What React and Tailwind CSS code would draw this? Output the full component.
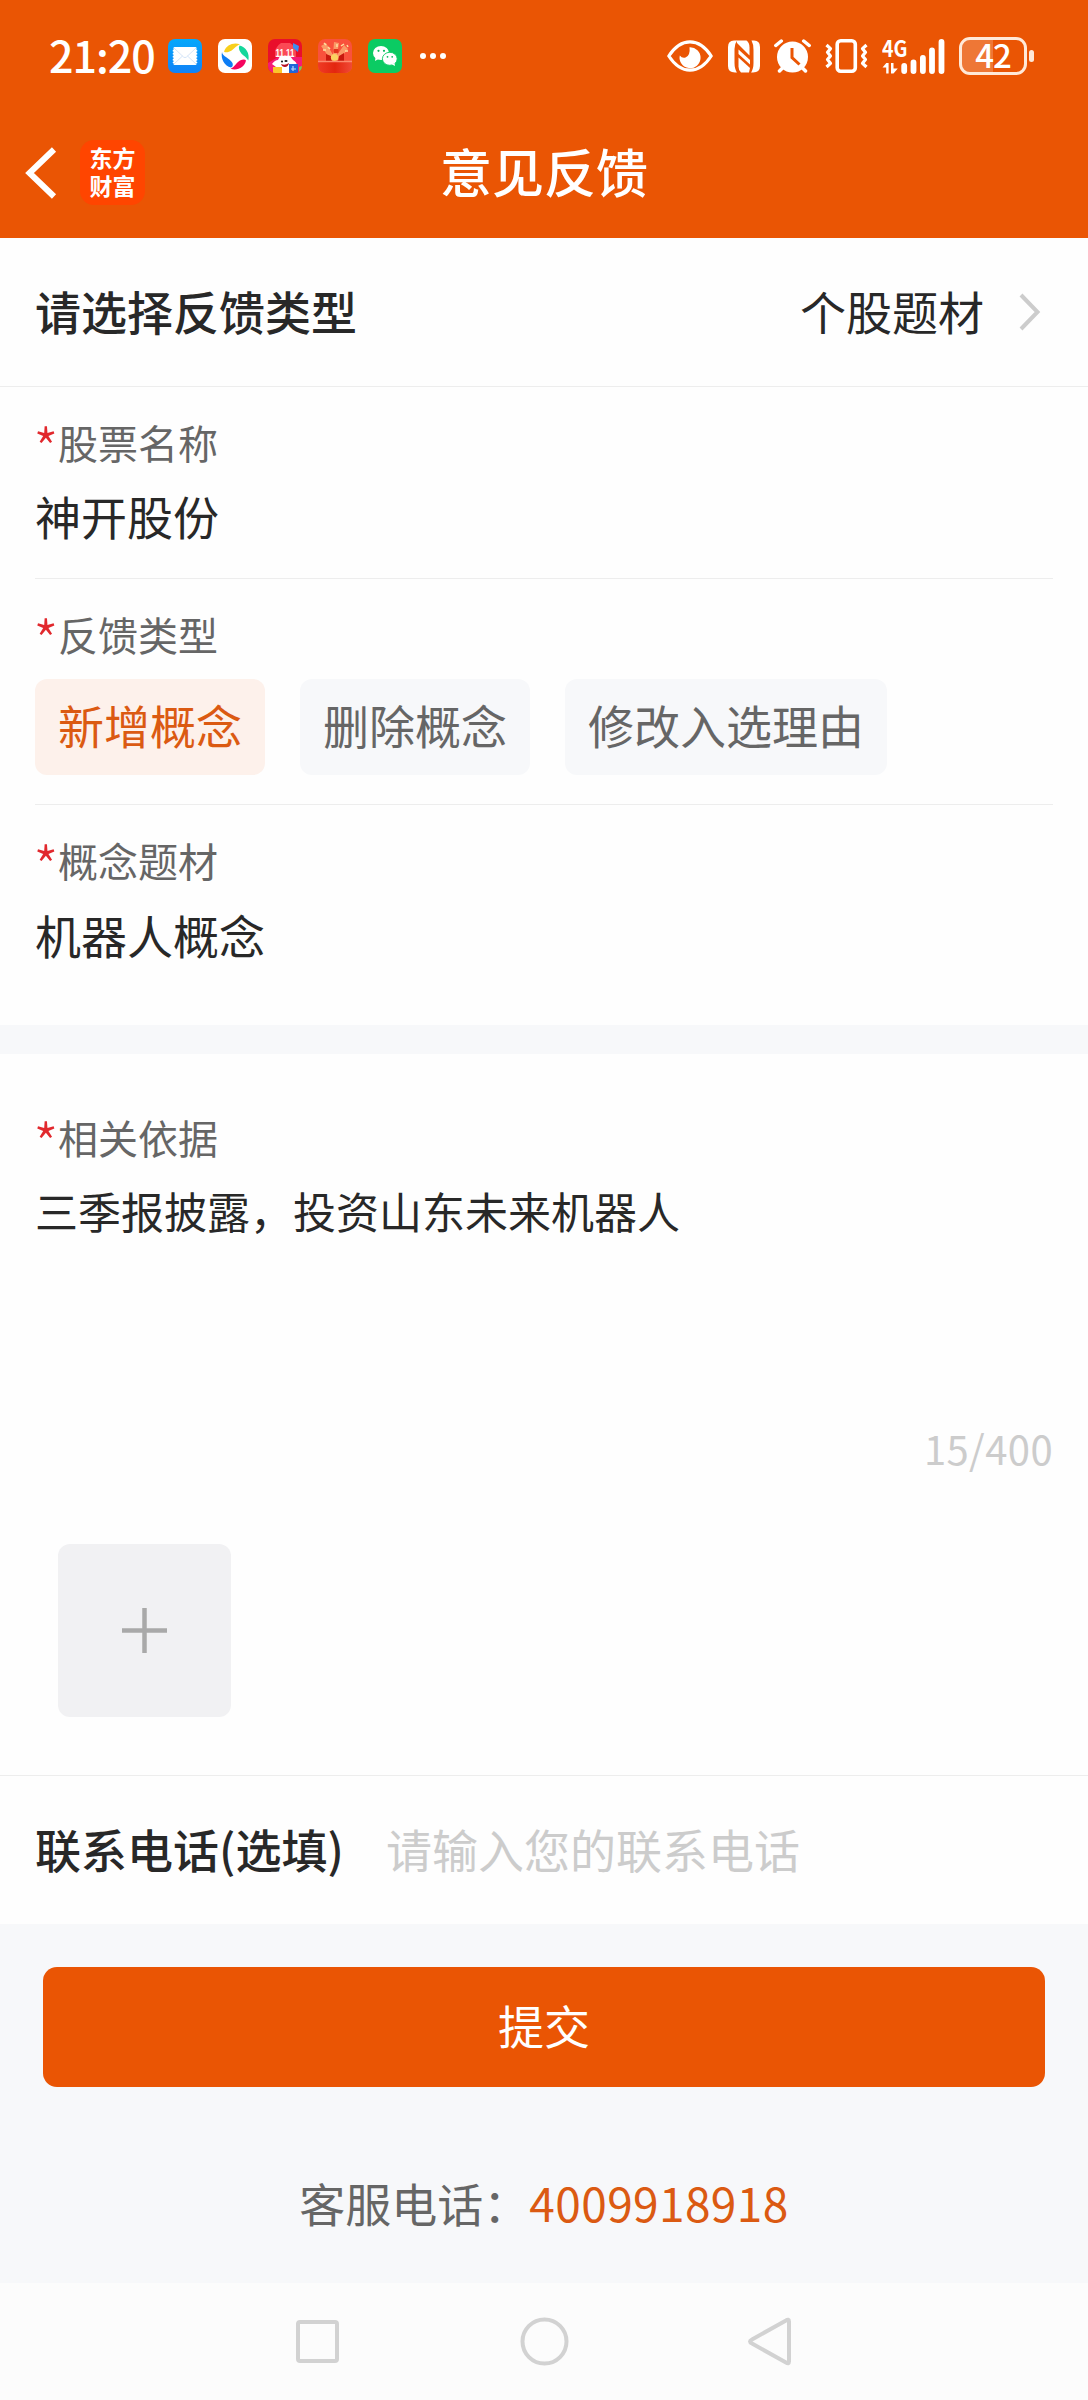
import React, { useState } from "react";

const feedbackTypes = ["新增概念", "删除概念", "修改入选理由"];

const MailIcon = () => (
  <svg className="w-[34px] h-[34px]" viewBox="0 0 34 34">
    <defs>
      <linearGradient id="mail" x1="0" y1="0" x2="0" y2="1">
        <stop offset="0" stopColor="#05a8fb" />
        <stop offset="1" stopColor="#1182f7" />
      </linearGradient>
    </defs>
    <rect width="34" height="34" rx="7" fill="url(#mail)" />
    <rect x="5.5" y="8" width="23" height="18" rx="1" fill="#fff" />
    <path d="M5.5 11v13M28.500 11v13" stroke="#fff" strokeWidth="1.500" strokeDasharray="1.500 1.500" />
    <path d="M6 9l9.500 9q1.500 1.300 3 0l9.500-9M6 25l8.500-8M28 25l-8.500-8" fill="none" stroke="#c9ddf5" strokeWidth="0.800" />
  </svg>
);

const BrowserIcon = () => (
  <svg className="w-[34px] h-[34px]" viewBox="0 0 34 34">
    <rect width="34" height="34" rx="7" fill="#fff" />
    <path d="M6 12.500C8.500 6 15 3 22 5.200C17.500 6.500 15.500 12 9.500 13.200Q7 13.700 6 12.500z" fill="#f8cf1c" />
    <path d="M21.500 6.500C28 8 32 14.500 30.300 21.500C28.500 17.500 23.500 16.500 21.300 11Q20.300 8 21.500 6.500z" fill="#16d79b" />
    <path d="M28 21.500C26.500 28.500 19.500 32 12.500 29.800C17 28.500 18 22.500 24 20.800Q27 20.200 28 21.500z" fill="#f5045f" />
    <path d="M4 13C4.500 18 11.500 18.500 14.500 24Q15.500 27.500 13 28.500C6.500 27 2.500 20 4 13z" fill="#0d7df5" />
  </svg>
);

const SaleIcon = () => (
  <svg className="w-[34px] h-[34px]" viewBox="0 0 34 34">
    <clipPath id="sale">
      <rect width="34" height="34" rx="7" />
    </clipPath>
    <g clipPath="url(#sale)">
      <rect width="34" height="34" fill="#e90f2b" />
      <path d="M0 34V24l10-6h24v16z" fill="#f51b75" />
      <path d="M7 18Q6 8 13 4h9q7 4 6 14z" fill="#fb4a55" />
      <path d="M25 4l6 3-1 6-5-4z" fill="#3d8df0" />
      <path d="M4 25q3-4 6-4l2-4h10l3 4q4 2 4 6l-4 2q-1 6-8 6-8 0-9-7z" fill="#fff" />
      <circle cx="14" cy="22.500" r="1.100" fill="#222" />
      <ellipse cx="18" cy="22" rx="1.600" ry="1.100" fill="#222" />
      <path d="M13 25q4 2 8-1-1 4-4 4t-4-3z" fill="#b50f20" />
      <rect x="5" y="28" width="9" height="6" fill="#fbc62a" />
      <rect x="21" y="25" width="9" height="9" fill="#1f66d8" />
      <path d="M23 30h5M25 27v5" stroke="#bcd8fb" strokeWidth="1.200" />
      <path d="M31 28l3-1v7h-3z" fill="#74d648" />
      <text x="17" y="17.500" textAnchor="middle" fontSize="11.500" fontWeight="bold" fontFamily="Liberation Sans, sans-serif" textLength="19" lengthAdjust="spacingAndGlyphs" fill="#fff">
        11.11
      </text>
    </g>
  </svg>
);

const RedPacketIcon = () => (
  <svg className="w-[34px] h-[34px]" viewBox="0 0 34 34">
    <defs>
      <linearGradient id="packet" x1="0" y1="0" x2="1" y2="0">
        <stop offset="0" stopColor="#ef3b25" />
        <stop offset="0.500" stopColor="#e3260f" />
        <stop offset="1" stopColor="#f04a36" />
      </linearGradient>
      <clipPath id="packetClip">
        <rect width="34" height="34" rx="7" />
      </clipPath>
    </defs>
    <g clipPath="url(#packetClip)">
      <rect width="34" height="34" fill="#f9513c" />
      <path d="M13 21L3 7l5-3 7 12 1-13 5 1-2 12 7-10 4 4-9 11z" fill="#fb9a67" />
      <path d="M8 15l5 2 1 5H8zM26 14l-5 3-1 5h6z" fill="#c8190e" />
      <path d="M5 11h3M10 8l2 2M23 7l3-2M27 12h3M19 5v3M6 4l2 2M29 6l1 2" stroke="#fde0a0" strokeWidth="1.500" />
      <rect x="15.500" y="10" width="5" height="4" rx="1" fill="#e2321c" />
      <circle cx="16.500" cy="18.500" r="3.600" fill="#fbd160" />
      <path d="M0 22h34v12H0z" fill="url(#packet)" />
      <path d="M0 22.500h34" stroke="#fb8a6e" strokeWidth="1.500" />
    </g>
  </svg>
);

const WechatIcon = () => (
  <svg className="w-[34px] h-[34px]" viewBox="0 0 34 34">
    <rect width="34" height="34" rx="7" fill="#0bcb63" />
    <path d="M7.500 18.500L7 22l3.500-2z" fill="#fff" />
    <ellipse cx="13" cy="14" rx="8" ry="7" fill="#fff" />
    <ellipse cx="21.800" cy="19.800" rx="7.400" ry="6.500" fill="#fff" stroke="#0bcb63" strokeWidth="0.900" />
    <path d="M24 25.500l3 1.500-.5-3z" fill="#fff" />
    <circle cx="10.500" cy="11.800" r="1.100" fill="#0bb85a" />
    <circle cx="16" cy="11.800" r="1.100" fill="#0bb85a" />
    <circle cx="19.500" cy="17.800" r="0.900" fill="#0bb85a" />
    <circle cx="24.200" cy="17.800" r="0.900" fill="#0bb85a" />
  </svg>
);

const EyeIcon = () => (
  <svg className="w-[46px] h-[32px]" viewBox="0 0 46 32">
    <path d="M1.800 16Q11 1.800 23 1.800T44.200 16Q35 30.200 23 30.200T1.800 16z" fill="none" stroke="#fff" strokeWidth="3.200" strokeLinejoin="round" />
    <path d="M22.500 7.200A10.500 10.500 0 1 1 12.800 15.500Q15 18.500 18.500 17.500Q23.500 15.500 22.500 7.200z" fill="#fff" />
  </svg>
);

const NfcIcon = () => (
  <svg className="w-[32px] h-[33px]" viewBox="0 0 32 33">
    <path d="M6 0.500h3Q6.500 4 6.500 9v14q0 6 2.500 9.500H7Q0 32.500 0 26V7Q0 .5 6 .5z" fill="#fff" />
    <path d="M8.500 .5h10q3 2 3 7v8L9 3z" fill="#fff" />
    <path d="M10.500 9.500L22 20v4.500L10.500 14z" fill="#fff" />
    <path d="M10.500 17.500L22 28l-1 4.500H13q-2.500-2-2.500-6z" fill="#fff" />
    <path d="M23.500 .5H26q6 0 6 6.500v19q0 6.500-7 6.500h-2q2.500-3.500 2.500-9.500V10q0-6-2-9.500z" fill="#fff" />
  </svg>
);

const AlarmIcon = () => (
  <svg className="w-[37px] h-[34px]" viewBox="0 0 37 34">
    <circle cx="18.500" cy="18" r="15.500" fill="#fff" />
    <path d="M1.800 6.500l5.500-4.500M35.200 6.500L29.700 2M5.500 32l4-4M31.500 32l-4-4" stroke="#fff" strokeWidth="3.500" strokeLinecap="round" />
    <path d="M18 9v9.500l7.500 7" fill="none" stroke="#ea5504" strokeWidth="3" />
  </svg>
);

const VibrateIcon = () => (
  <svg className="w-[43px] h-[34px]" viewBox="0 0 43 34">
    <rect x="12.200" y="1.800" width="18.100" height="30.400" rx="3.500" fill="none" stroke="#fff" strokeWidth="3.600" />
    <path d="M1.500 6l4 3.700-3 3.600 3 3.700-3 3.600 3 3.700-4 3.700M41.500 6l-4 3.700 3 3.600-3 3.700 3 3.600-3 3.700 4 3.700" fill="none" stroke="#fff" strokeWidth="3.200" strokeLinejoin="round" />
  </svg>
);

const SignalIcon = () => (
  <svg className="w-[63px] h-[55px]" viewBox="0 -10 63 55">
    <text x="0" y="17.500" fontSize="22.500" fontWeight="700" fontFamily="Noto Sans CJK SC, sans-serif" textLength="25.500" lengthAdjust="spacingAndGlyphs" fill="#fff">
      4G
    </text>
    <path d="M0.500 28.500L4.300 24h2.300v10.500H4.200v-6zM15.800 29.500L11.500 34.500H9V24h2.500v5.500z" fill="#fff" />
    <path d="M22.200 27v5M31.500 23.500V32M40.900 19v13M50 11.500V32M59.500 3v29" stroke="#fff" strokeWidth="5.800" strokeLinecap="round" />
  </svg>
);

const Label = ({ children }) => (
  <div className="flex h-[60px] leading-[60px] text-[40px] text-[#666]">
    <span className="w-[23px] -ml-[2px] mr-[2px] text-[58px] leading-[70px] font-light text-[#e1282d]">*</span>
    {children}
  </div>
);

const App = () => {
  const [type, setType] = useState(0);

  return (
    <div
      lang="zh-CN"
      className="w-[1088px] h-[2400px] flex flex-col bg-[#fefefe] text-[46px] text-[#282828] font-['Noto_Sans_CJK_SC',sans-serif]"
    >
      {/* Header */}
      <header className="h-[238px] bg-[#ea5504] text-white">
        <div className="h-[112px] pl-[49px] pr-[54px] flex items-center justify-between">
          <div className="flex items-center">
            <span className="w-[119px] text-[43px] leading-[60px] pb-[4px] font-medium tracking-[-1px]">21:20</span>
            <div className="flex gap-4">
              <MailIcon />
              <BrowserIcon />
              <SaleIcon />
              <RedPacketIcon />
              <WechatIcon />
            </div>
            <div className="flex gap-1 ml-[18px]">
              <span className="w-[6px] h-[6px] rounded-full bg-white" />
              <span className="w-[6px] h-[6px] rounded-full bg-white" />
              <span className="w-[6px] h-[6px] rounded-full bg-white" />
            </div>
          </div>
          <div className="flex items-center">
            <EyeIcon />
            <div className="ml-[15px]"><NfcIcon /></div>
            <div className="ml-[14px]"><AlarmIcon /></div>
            <div className="ml-[14px]"><VibrateIcon /></div>
            <div className="ml-[14px]"><SignalIcon /></div>
            <div className="ml-[14px] w-[68px] h-[38px] rounded-[11px] border-[3px] border-[#ffe9d8] relative flex items-center justify-center">
              <div className="absolute left-0 inset-y-0 w-[31px] rounded-l-lg bg-white/20" />
              <span className="relative text-[33px] leading-[48px] -my-2 pb-[4px] font-medium tracking-[-1px]">42</span>
            </div>
            <span className="ml-[2px] w-[5px] h-[12px] rounded-full bg-[#ffe9d8]" />
          </div>
        </div>
        <div className="h-[121px] grid grid-cols-3 items-center">
          <div className="flex items-center pl-[25px]">
            <svg className="w-[33px] h-[54px]" viewBox="0 0 33 54">
              <path d="M29 3.500L4.500 27L29 50.500" fill="none" stroke="#fff" strokeWidth="6" />
            </svg>
            <div className="ml-[22px] w-[65px] h-[65px] rounded-[14px] bg-[#ff4500] flex items-center justify-center text-center text-[23px] leading-[28px] font-bold pb-[3px]">
              东方
              <br />
              财富
            </div>
          </div>
          <h1 className="text-[52px] leading-[70px] pb-[4px] text-center font-medium">意见反馈</h1>
        </div>
      </header>

      <div className="h-[149px] pl-[35px] pr-[47px] pb-[4px] border-b border-[#ededed] flex items-center justify-between">
        <span className="font-medium">请选择反馈类型</span>
        <div className="flex items-center">
          <span>个股题材</span>
          <svg className="ml-[35px] mt-[3px] w-[22px] h-[38px]" viewBox="0 0 22 38">
            <path d="M2 2L18.500 19L2 36" fill="none" stroke="#ccc" strokeWidth="4" />
          </svg>
        </div>
      </div>

      {/* Stock */}
      <div className="px-[35px]">
        <div className="h-[192px] pt-[25px] border-b border-[#ededed]">
          <Label>股票名称</Label>
          <div className="mt-2 leading-[70px]">神开股份</div>
        </div>
        <div className="h-[226px] pt-[25px] border-b border-[#ededed]">
          <Label>反馈类型</Label>
          <div className="flex gap-[35px] mt-[15px]">
            {feedbackTypes.map((item, index) => (
              <button
                key={item}
                onClick={() => setType(index)}
                className={`h-24 px-[23px] pb-[5px] rounded-xl ${
                  index === type ? "bg-[#fdf1eb] text-[#db5a12]" : "bg-[#f7f8fa] text-[#666]"
                }`}
              >
                {item}
              </button>
            ))}
          </div>
        </div>
        <div className="h-[220px] pt-[25px]">
          <Label>概念题材</Label>
          <div className="mt-[9px] leading-[70px]">机器人概念</div>
        </div>
      </div>

      <div className="h-[29px] bg-[#f7f8fa]" />

      {/* Reason */}
      <div className="h-[722px] px-[35px] pt-[53px] border-b border-[#ededed]">
        <Label>相关依据</Label>
        <p className="mt-[10px] h-[241px] text-[43px] leading-[66px]">三季报披露，投资山东未来机器人</p>
        <div className="text-right text-[40px] leading-[60px] tracking-[0.4px] text-[#ccc]">15/400</div>
        <button className="mt-[66px] ml-[23px] w-[173px] h-[173px] rounded-xl bg-[#f1f1f3] flex items-center justify-center">
          <svg className="w-[45px] h-[45px]" viewBox="0 0 45 45">
            <path d="M22.500 0v45M0 22.500h45" stroke="#a9a9a9" strokeWidth="4.500" />
          </svg>
        </button>
      </div>

      <div className="h-[148px] px-[35px] pb-[4px] flex items-center">
        <span className="w-[351px] font-medium">联系电话(选填)</span>
        <input
          className="flex-1 min-w-0 outline-none placeholder:text-[#ccc]"
          placeholder="请输入您的联系电话"
        />
      </div>

      {/* Footer */}
      <div className="h-[359px] bg-[#f7f8fa] px-[43px] pt-[43px]">
        <button className="w-full h-[120px] pb-[5px] rounded-[14px] bg-[#ea5504] text-white">提交</button>
        <div className="mt-20 flex justify-center leading-[70px] text-[#666]">
          客服电话：<span className="tracking-[0.4px] text-[#db5a12]">4009918918</span>
        </div>
      </div>

      <nav className="h-[117px] bg-[#fcfcfc] flex justify-center items-center">
        <svg className="w-[498px] h-[50px]" viewBox="0 0 498 50" fill="none" stroke="#d2d2d2" strokeWidth="4">
          <rect x="3" y="5" width="39" height="39" rx="2" />
          <circle cx="249.500" cy="24.500" r="22" />
          <path d="M494 4.500v40q0 3-3 1l-34-19q-4-2 0-4l34-19q3-2 3 1z" strokeLinejoin="round" />
        </svg>
      </nav>
    </div>
  );
};

export default App;
